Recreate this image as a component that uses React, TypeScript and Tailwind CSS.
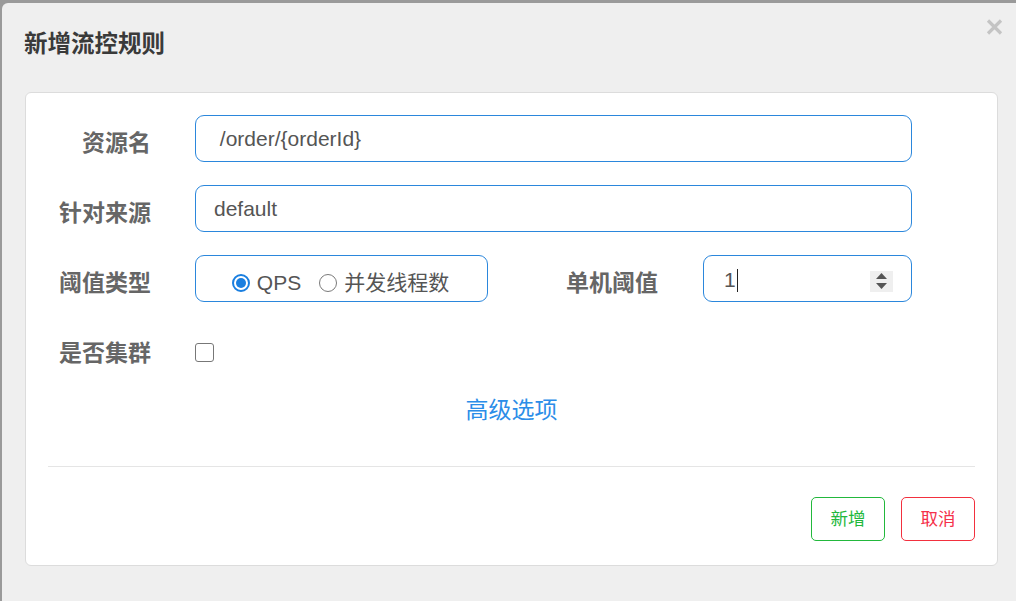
import React from "react";

const cjk = "font-['Liberation_Sans','Noto_Sans_CJK_SC',sans-serif]";

function Label({ children, className = "" }: { children: React.ReactNode; className?: string }) {
  return (
    <div className={`shrink-0 pt-2 text-right text-[23px] font-bold leading-[30px] text-[#666] ${className}`}>
      {children}
    </div>
  );
}

function Radio({ checked }: { checked?: boolean }) {
  if (checked) {
    return (
      <span className="flex h-[18px] w-[18px] shrink-0 items-center justify-center rounded-full border-2 border-[#1a7fe0] bg-white">
        <span className="h-[10px] w-[10px] rounded-full bg-[#1a7fe0]" />
      </span>
    );
  }
  return <span className="block h-[18px] w-[18px] shrink-0 rounded-full border-[1.5px] border-[#7a7a7a] bg-white" />;
}

export default function App() {
  return (
    <div className={`h-[601px] w-[1016px] overflow-hidden bg-[#9a9a9a] pl-[2px] pt-[3px] ${cjk}`}>
      {/* ── Dialog ─────────────────────────────────────────── */}
      <div className="h-[620px] w-[1014px] rounded-tl-[6px] bg-[#efefef]">
        <div className="flex items-start justify-between pl-[22px] pr-[13px] pt-[25px]">
          <h1 className="text-[23.5px] font-bold leading-[32px] text-[#3a3a3a]">新增流控规则</h1>
          <svg width="17" height="16" viewBox="0 0 17 16" className="-mt-[9px]">
            <path d="M2 1.5 L15 14.5 M15 1.5 L2 14.5" stroke="#c4c4c4" strokeWidth="3.2" />
          </svg>
        </div>

        {/* ── Form card ────────────────────────────────────── */}
        <div className="ml-[23px] mt-[32px] w-[973px] rounded-[6px] border border-[#dcdcdc] bg-white px-[22px] pb-[24px] pt-[22px]">
          <div className="flex flex-col gap-[23px]">
            <div className="flex h-[47px] items-center">
              <Label className="w-[103px]">资源名</Label>
              <div className="ml-[44px] flex h-full w-[717px] items-center whitespace-pre rounded-[9px] border border-[#2b87dc] px-[18px] text-[21px] text-[#555]">
                {" /order/{orderId}"}
              </div>
            </div>

            <div className="flex h-[47px] items-center">
              <Label className="w-[103px]">针对来源</Label>
              <div className="ml-[44px] flex h-full w-[717px] items-center rounded-[9px] border border-[#2b87dc] px-[18px] text-[21px] text-[#555]">
                default
              </div>
            </div>

            <div className="flex h-[47px] items-center">
              <Label className="w-[103px]">阈值类型</Label>
              <div className="ml-[44px] flex h-full w-[293px] shrink-0 items-center justify-center rounded-[9px] border border-[#2b87dc] pr-[2px] pt-[8px] text-[21px] text-[#555]">
                <Radio checked />
                <span className="ml-[7px]">QPS</span>
                <span className="ml-[18px]">
                  <Radio />
                </span>
                <span className="ml-[7px]">并发线程数</span>
              </div>
              <Label className="w-[170px]">单机阈值</Label>
              <div className="ml-[45px] flex h-full w-[209px] items-center justify-between rounded-[9px] border border-[#2b87dc] pl-[20px] pr-[18px] pt-[3px] text-[21px] text-[#555]">
                <span className="flex items-center">
                  1<span className="ml-[1px] h-[23px] w-[1.5px] bg-[#222]" />
                </span>
                <span className="mt-[2px] flex h-[21px] w-[23px] flex-col items-center justify-center gap-[4px] bg-[#efefef]">
                  <svg width="11" height="6" viewBox="0 0 11 6">
                    <path d="M5.5 0 L11 6 L0 6 Z" fill="#555" />
                  </svg>
                  <svg width="11" height="6" viewBox="0 0 11 6">
                    <path d="M0 0 L11 0 L5.5 6 Z" fill="#555" />
                  </svg>
                </span>
              </div>
            </div>

            <div className="flex h-[47px] items-center">
              <Label className="w-[103px]">是否集群</Label>
              <span className="ml-[44px] mt-2 block h-[19px] w-[19px] shrink-0 rounded-[3px] border-[1.5px] border-[#777] bg-white" />
            </div>
          </div>

          <div className="mt-[23px] text-center text-[23px] leading-[30px] text-[#2b8de8]">高级选项</div>

          <div className="mt-[41px] h-px bg-[#e5e5e5]" />

          <div className="mt-[30px] flex justify-end gap-[16px]">
            <button className="h-[44px] w-[74px] rounded-[5px] border border-[#22b83c] text-[17.5px] text-[#22b83c]">
              新增
            </button>
            <button className="h-[44px] w-[74px] rounded-[5px] border border-[#f2303e] text-[17.5px] text-[#f5304a]">
              取消
            </button>
          </div>
        </div>
      </div>
    </div>
  );
}
